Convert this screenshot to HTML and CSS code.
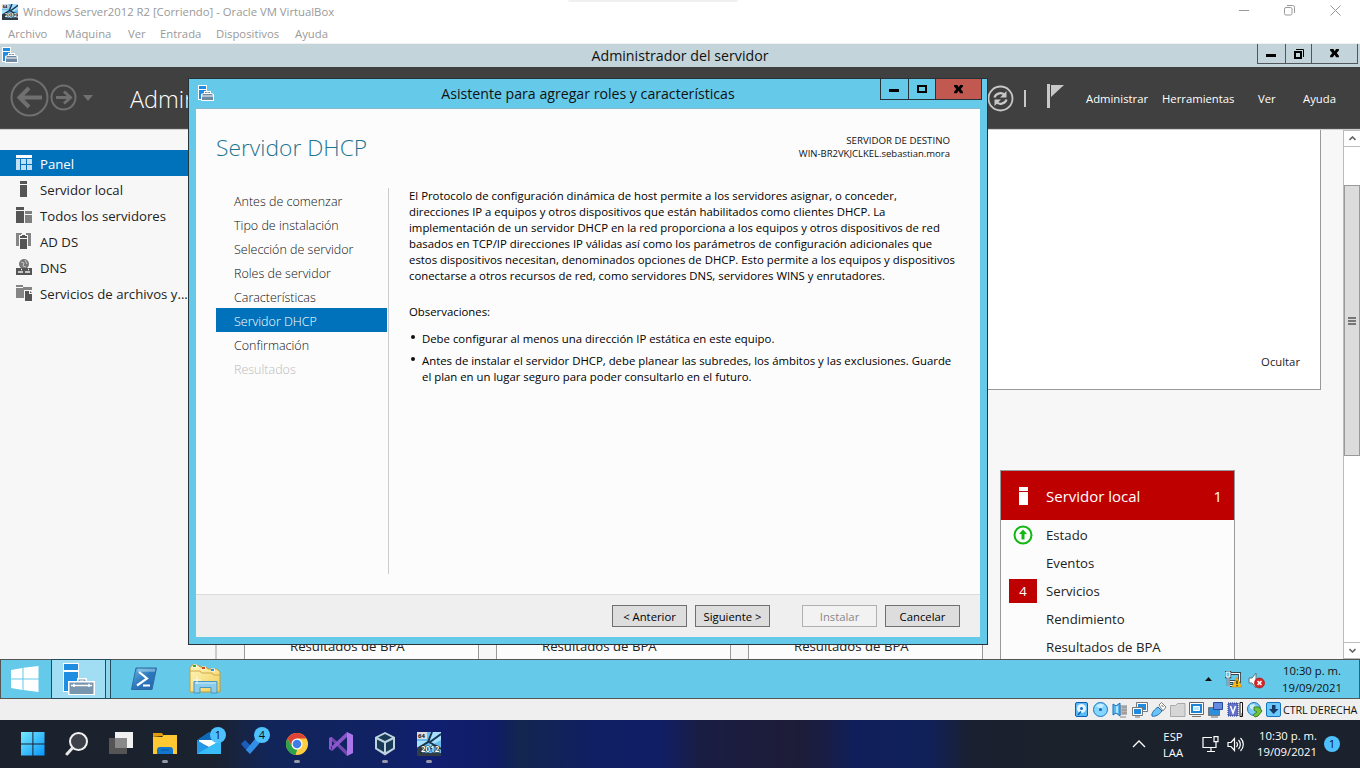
FILE: index.html
```html
<!DOCTYPE html>
<html lang="es">
<head>
<meta charset="utf-8">
<title>Windows Server2012 R2 [Corriendo] - Oracle VM VirtualBox</title>
<link rel="stylesheet" href="styles.css">
</head>
<body>
<svg class="defs" width="0" height="0">
  <symbol id="toolbox" viewBox="0 0 32 32">
    <path d="M0 0h16v18h-5v11H0z" fill="#fff"/>
    <path d="M1 1h14v6H1zM1 9h14v9h-5v10H1z" fill="#1f8ee0"/>
    <path d="M5 18h9v-3h10v3h8v14H5z" fill="#fff"/>
    <path d="M15.500 18v-1.500h7V18h-1.500v-.5h-4v.5zM6.500 19.500h24v11.500h-24z" fill="#7896ad"/>
    <path d="M8 22.500h21M11 20.800v3.200M26 20.800v3.200" stroke="#fff" stroke-width="1.500"/>
  </symbol>
  <symbol id="toolbox-small" viewBox="0 0 16 16">
    <path d="M0 0h9v9H6v6H0z" fill="#fff"/>
    <path d="M1 1h7v3H1zM1 5h7v4H5v5H1z" fill="#1f8ee0"/>
    <path d="M3 9l3-1V6h7v2l3 1v7H3z" fill="#fff"/>
    <path d="M7 8V7h5v1h-1.500v-.4h-2V8zM5 9h9l1 1.500H4zM4 11.500h11V15H4z" fill="#7089a3"/>
  </symbol>
  <symbol id="winx" viewBox="0 0 10 10"><path d="M1 1h3l1.200 2L6.400 1H9v1.200L7 4.500l2 2.500v1.500H6.500L5 6.200 3.500 8.500H1V7l2-2.500-2-2.300z" fill="currentColor"/></symbol>
</svg>
<div class="screen">
  <div class="notch"></div>
  <header class="host-title">
    <svg width="16" height="16" viewBox="0 0 24 24"><use href="#vm2012"/></svg>
    <span class="host-name">Windows Server2012 R2 [Corriendo] - Oracle VM VirtualBox</span>
    <div class="host-controls">
      <svg width="10" height="10" viewBox="0 0 10 10"><path d="M0 5.500h10" stroke="#999"/></svg>
      <svg width="11" height="11" viewBox="0 0 11 11"><rect x=".5" y="2.500" width="7.500" height="7.500" rx="1.500" fill="none" stroke="#999"/><path d="M3 .5h5.500a2 2 0 0 1 2 2V8" fill="none" stroke="#999"/></svg>
      <svg width="11" height="11" viewBox="0 0 11 11"><path d="M.5.5l10 10M10.500.5l-10 10" stroke="#999"/></svg>
    </div>
  </header>
  <nav class="host-menu"><span class="m1">Archivo</span><span class="m2">Máquina</span><span class="m3">Ver</span><span class="m4">Entrada</span><span class="m5">Dispositivos</span><span>Ayuda</span></nav>

  <div class="guest-title">
    <svg class="app-icon" width="16" height="16"><use href="#toolbox-small"/></svg>
    <span class="guest-name">Administrador del servidor</span>
    <div class="win-buttons">
      <span class="wb min"><i></i></span>
      <span class="wb res"><svg width="10" height="10" viewBox="0 0 10 10"><path d="M1 3h6v6H1z" fill="none" stroke="#000" stroke-width="2"/><path d="M2 .5h7.500V8" fill="none" stroke="#000"/></svg></span>
      <span class="wb cls"><svg width="11" height="11"><use href="#winx"/></svg></span>
    </div>
  </div>
  <div class="banner">
    <svg class="navs" width="84" height="40" viewBox="0 0 84 40" fill="none" stroke="#707070">
      <circle cx="19.500" cy="19.500" r="18" stroke-width="2"/><circle cx="53.500" cy="19.500" r="12" stroke-width="2"/>
      <path d="M32 19.500H10M19 10L9.500 19.500 19 29" stroke-width="4"/>
      <path d="M46 19.500h14M54 13.500l6.500 6-6.500 6" stroke-width="3"/>
    </svg>
    <svg class="drop" width="10" height="6"><path d="M0 0h10L5 6z" fill="#707070"/></svg>
    <span class="banner-title">Admin</span>
    <div class="banner-tools">
      <svg width="27" height="27" viewBox="0 0 27 27" fill="none" stroke="#c8c8c8"><circle cx="13.500" cy="13.500" r="12" stroke-width="1.800"/><path d="M7.500 12.500c1-4.500 8-6 10.500-2M19.500 14.500c-1 4.500-8 6-10.500 2" stroke-width="2.200"/><path d="M19.500 6v6.500H13zM7.500 21v-6.500H14z" fill="#c8c8c8" stroke="none"/></svg>
      <i class="pipe"></i>
      <svg class="flag" width="17" height="25"><path d="M0 0h3v24H0zM4 1h13L4 13z" fill="#c8c8c8"/></svg>
      <span class="t1">Administrar</span><span class="t2">Herramientas</span><span class="t3">Ver</span><span>Ayuda</span>
    </div>
  </div>

  <div class="workspace">
    <aside class="sidebar">
      <div class="side on"><svg width="16" height="16"><path d="M0 0h16v3H0z" fill="#fff"/><path d="M0 4h4v11H0zM5 4h5v5H5zM11 4h5v5h-5zM5 10h5v5H5zM11 10h5v5h-5z" fill="#c2def2"/></svg><span>Panel</span></div>
      <div class="side"><svg width="16" height="16"><path d="M4 0h7v3H4zM4 4h7v12H4z" fill="#555"/></svg><span>Servidor local</span></div>
      <div class="side"><svg width="16" height="16"><path d="M0 0h8v3H0zM0 4h8v12H0z" fill="#555"/><path d="M9 4h7v3H9zM9 8h7v8H9z" fill="#808080"/></svg><span>Todos los servidores</span></div>
      <div class="side"><svg width="16" height="16"><path d="M0 0h6v3H3v10H0zM10 0h5v13h-3V3h-2z" fill="#858585"/><path d="M3 2h2V1h5v1h2v3H3z" fill="#f7f7f7"/><path d="M4 3h2V2h3v1h2v2H4zM4 6h7v10H4z" fill="#555"/></svg><span>AD DS</span></div>
      <div class="side"><svg width="16" height="16"><circle cx="8" cy="5" r="5" fill="#777"/><path d="M5 3l3 1-1 3 3 1M9 1l2 4" stroke="#c8c8c8" fill="none"/><path d="M0 9h16v7H0z" fill="#555"/><path d="M2 13h5M9 13h5M5 10.500h1M12 10.500h1" stroke="#eee" stroke-width="1.500"/></svg><span>DNS</span></div>
      <div class="side"><svg width="16" height="16"><path d="M0 0h7v2H0zM0 3h7V2h9v11H0z" fill="#858585"/><path d="M8 5h9v11H8z" fill="#f7f7f7"/><path d="M9 6h4v3h3v7H9zM14 6l2 2h-2z" fill="#555"/></svg><span>Servicios de archivos y...</span></div>
    </aside>
    <main class="dash">
      <section class="welcome"><span>Ocultar</span></section>
      <section class="tiles">
        <article class="tile short"><div class="row"><b></b><span>Resultados de BPA</span></div></article>
        <article class="tile short"><div class="row"><b></b><span>Resultados de BPA</span></div></article>
        <article class="tile short"><div class="row"><b></b><span>Resultados de BPA</span></div></article>
        <article class="tile">
          <div class="tile-head"><svg width="9" height="18"><path d="M0 0h9v4H0zM0 5h9v13H0z" fill="#fff"/></svg><span>Servidor local</span><em>1</em></div>
          <div class="row"><b><svg width="20" height="20" viewBox="0 0 20 20"><circle cx="10" cy="10" r="8.500" fill="none" stroke="#12b812" stroke-width="2"/><path d="M10 4.500l4 4.500h-2.500v5.500h-3V9H6z" fill="#12b812"/></svg></b><span>Estado</span></div>
          <div class="row"><b></b><span>Eventos</span></div>
          <div class="row"><b class="alert">4</b><span>Servicios</span></div>
          <div class="row"><b></b><span>Rendimiento</span></div>
          <div class="row"><b></b><span>Resultados de BPA</span></div>
        </article>
      </section>
    </main>
    <div class="scroll">
      <span class="sb"><svg width="7" height="5"><path d="M.5 4L3.500 1l3 3" fill="none" stroke="#666" stroke-width="1.600"/></svg></span>
      <div class="thumb"><i></i><i></i><i></i></div>
      <span class="sb down"><svg width="7" height="5"><path d="M.5 1l3 3 3-3" fill="none" stroke="#666" stroke-width="1.600"/></svg></span>
    </div>
  </div>

  <div class="guest-bar">
    <span class="g-start"><svg width="28" height="26" viewBox="0 0 28 26"><path d="M0 4l11.500-2v10.500H0zM12.500 1.800L27.500 0v12.500h-15zM0 13.500h11.500V24L0 22zM12.500 13.500h15V26l-15-2z" fill="#fff"/></svg></span>
    <span class="g-active"><svg width="32" height="32"><use href="#toolbox"/></svg></span><span class="g-strip"></span>
    <svg class="g-ps" width="28" height="24" viewBox="0 0 28 24"><defs><linearGradient id="ps" x1="0" x2="1" y1="0" y2="1"><stop offset="0" stop-color="#6cb8e4"/><stop offset=".5" stop-color="#2d78bd"/><stop offset="1" stop-color="#2564ae"/></linearGradient></defs><path d="M6 1h20.500L22 22.500H1.500z" fill="url(#ps)" stroke="#2d6ba0" stroke-linejoin="round"/><path d="M8 1.800h17.500l-.7 3H7z" fill="#b6dff2" opacity=".5"/><path d="M9 5l8 6.500L7 18.500M13 18.500h7" fill="none" stroke="#fff" stroke-width="2.200"/></svg>
    <svg class="g-ex" width="32" height="30" viewBox="0 0 32 30"><defs><linearGradient id="fo" x1="0" x2="1" y1="0" y2="1"><stop offset="0" stop-color="#fff6bd"/><stop offset="1" stop-color="#f0cf57"/></linearGradient></defs><path d="M1 4l2-3h6l2 2h6l2 2h9l3 3v20H1z" fill="url(#fo)" stroke="#c69c35"/><path d="M4 2h4M13 4h4M22 6h4" stroke="#fff" stroke-width="3"/><path d="M4 2h3" stroke="#2eae2e" stroke-width="2"/><path d="M13 4h3" stroke="#d74520" stroke-width="2"/><path d="M22 6h3" stroke="#2496ea" stroke-width="2"/><path d="M1 7h10l1.500 2H23l1.500 2H31" stroke="#d0a94a" fill="none"/><path d="M5 29V17.500h23V29h-6v-5.500H11V29z" fill="#8bcdeb" stroke="#4895bd"/><path d="M6 19h21" stroke="#c8eaf8"/><path d="M8 12v8M4 16h8" stroke="#fff" opacity=".8"/></svg>
    <div class="g-tray">
      <svg width="7" height="4"><path d="M3.500 0L7 4H0z" fill="#111"/></svg>
      <svg class="g-net" width="17" height="17" viewBox="0 0 17 17"><path d="M4 2.500h10.500v8H5M9 11v3M5 14.500h8" fill="none" stroke="#33454e" stroke-width="3"/><path d="M4 2.500h10.500v8H5M9 11v3M5 14.500h8" fill="none" stroke="#fff" stroke-width="1.200"/><path d="M1 1h4v5H1zM3 6v9" fill="#65c9ea" stroke="#33454e" stroke-width="2.400"/><path d="M1 1h4v5H1zM3 6v9" fill="#65c9ea" stroke="#fff"/><path d="M12 6.500l5 9.500H7z" fill="#ffbd13" stroke="#c78610" stroke-width=".6"/><path d="M12 9.500v3.500M12 14v1.200" stroke="#222" stroke-width="1.300"/></svg>
      <svg class="g-vol" width="17" height="17" viewBox="0 0 17 17"><path d="M1 6h3l4-5v15l-4-5H1z" fill="#fff" stroke="#5b7480"/><circle cx="11.500" cy="11" r="5" fill="#d92525" stroke="#ad1212" stroke-width=".7"/><path d="M9.500 9l4 4M13.500 9l-4 4" stroke="#fff" stroke-width="1.700"/></svg>
      <div class="g-clock"><span>10:30 p. m.</span><span>19/09/2021</span></div>
    </div>
  </div>

  <div class="vb-status">
    <svg viewBox="0 0 16 16"><rect x="1.500" y=".5" width="12" height="14" rx="1.500" fill="#5bbcf5" stroke="#0d5fb5"/><circle cx="7.500" cy="6.500" r="4.500" fill="#e5f5ff"/><circle cx="7.500" cy="6.500" r="1.500" fill="#1a6bc2"/><path d="M7 9.500L4 13" stroke="#1464b0" stroke-width="1.600"/></svg>
    <svg viewBox="0 0 16 16"><circle cx="7.500" cy="7.500" r="7" fill="#84d6ff" stroke="#1a74c4"/><path d="M3 4a6 6 0 0 1 8-1L8 7z" fill="#c7efff"/><circle cx="7.500" cy="7.500" r="1.500" fill="#1c62aa"/></svg>
    <svg viewBox="0 0 16 16"><path d="M8 3h7v10H8z" fill="#b7b7b7"/><path d="M10 5h5M10 8h5M10 11h5M8 15h6" stroke="#888"/><path d="M1 2l3 2 4-3v13l-4-3-3 2z" fill="#55baf6" stroke="#1970bd"/><path d="M5 4v7" stroke="#d9f2ff" stroke-width="1.500"/></svg>
    <svg viewBox="0 0 16 16"><path d="M5.500 1.500h9v7h-9z" fill="#1e8be0" stroke="#fff"/><path d="M4.500.5h11v9h-11z" fill="none" stroke="#777"/><path d="M1.500 6.500h8v6h-8z" fill="#1e8be0" stroke="#fff"/><path d="M.5 5.500h10v8H.5zM3 15h5" fill="none" stroke="#777"/></svg>
    <svg viewBox="0 0 16 16"><path d="M1 14c-1-3 3-7 6-9l4 4c-3 4-7 6-10 5z" fill="#6cc3f8" stroke="#206eaf"/><path d="M8 3l2.500-2.500L15 5l-3 4z" fill="#fff" stroke="#808080"/><path d="M10.500 3l2 2" stroke="#555"/></svg>
    <svg viewBox="0 0 16 16"><path d="M.5 3.500h5l2-2h7.500v13H.5z" fill="#d6d6d6" stroke="#a9a9a9"/></svg>
    <svg viewBox="0 0 16 16"><path d="M.5.5h14v12H.5z" fill="#fff" stroke="#666"/><path d="M2 2h11v9H2z" fill="#1c85d5"/><path d="M4.500 4.500h6v4h-6z" fill="#bde7ff" stroke="#fff"/><path d="M3 14.500h9" stroke="#777"/></svg>
    <svg viewBox="0 0 16 16"><path d="M.5 5.500h11v8H.5z" fill="#2c8fdd" stroke="#777"/><path d="M5.500.5h9v7h-9z" fill="#648be0" stroke="#26489d"/><path d="M3 15h7" stroke="#777"/></svg>
    <svg viewBox="0 0 16 16"><rect x="1" y="1" width="10" height="13" fill="#6071ca" stroke="#27358b" stroke-dasharray="1 1"/><path d="M3.500 4l2.500 7L8.500 4" stroke="#fff" stroke-width="1.500" fill="none"/><path d="M13 .5h2.500v14H13z" fill="#fff" stroke="#111"/><path d="M14.500 11v3" stroke="#69d145"/></svg>
    <svg viewBox="0 0 16 16"><circle cx="7" cy="7" r="6.500" fill="#7bc9f7" stroke="#1d75bc"/><path d="M3 3l4-1 2 3-3 3-3-2z" fill="#c9efff"/><path d="M7 5h5l3 4-4 5-3 1-2-2 4-3-3-2z" fill="#70c43d" stroke="#3c7e22"/></svg>
    <svg viewBox="0 0 16 16"><rect x=".5" y=".5" width="14" height="14" rx="1.500" fill="#6ac8fb" stroke="#1573bd"/><path d="M6 3h3.500v4h3l-5 5-4.500-5h3z" fill="#183b6a"/></svg>
    <span>CTRL DERECHA</span>
  </div>

  <footer class="host-bar">
    <div class="apps">
      <span class="app"><svg width="24" height="24"><defs><linearGradient id="w11" x1="0" y1="0" x2="1" y2="1"><stop offset="0" stop-color="#77eaff"/><stop offset="1" stop-color="#0796fb"/></linearGradient></defs><path d="M0 0h11.400v11.400H0zM12.400 0H23.500v11.400H12.400zM0 12.400h11.400V23.500H0zM12.400 12.400H23.500V23.500H12.400z" fill="url(#w11)"/></svg></span>
      <span class="app"><svg width="24" height="24"><circle cx="13.500" cy="9.500" r="8.500" fill="#3d424a" stroke="#f3f3f3" stroke-width="2"/><path d="M7.500 16L2 22" stroke="#e7e7e7" stroke-width="3" stroke-linecap="round"/></svg></span>
      <span class="app"><svg width="24" height="24"><path d="M6 0h18v16H6z" fill="#f1f1f1"/><path d="M0 6h18v16H0z" fill="#555"/><path d="M6 6h12v10H6z" fill="#898989"/></svg></span>
      <span class="app open"><svg width="24" height="24"><path d="M0 1h9l2 3h-2L0 5z" fill="#e09b0c"/><path d="M0 5h9l2-2h13v19H0z" fill="#ffc933"/><path d="M4 22v-4q0-3 3-3h10q3 0 3 3v4z" fill="#1077cc"/><path d="M8 18h8" stroke="#0c559d"/></svg></span>
      <span class="app"><svg width="24" height="24"><path d="M0 8L12 0l12 8v14H0z" fill="#1069b6"/><path d="M2 8h20v2l-10 5L2 10z" fill="#fff"/><path d="M0 8l14 9-14 5z" fill="#2697e6"/><path d="M24 8v14H0z" fill="#38bdf8"/></svg><i class="badge">1</i></span>
      <span class="app"><svg width="24" height="24"><path d="M0 12l4-4 6 6-4 5z" fill="#1b5db9"/><path d="M5 18L18 2l5 4L9 22z" fill="#328fe5"/></svg><i class="badge">4</i></span>
      <span class="app open"><svg width="24" height="24"><circle cx="12" cy="12" r="11" fill="#ffcd40"/><path d="M2.500 6.500A11 11 0 0 1 21.500 6.500H12L7.200 14.700z" fill="#df4336"/><path d="M2.500 6.500L7.200 15a5.500 5.500 0 0 0 5 2.500L10.500 23A11 11 0 0 1 2.500 6.500z" fill="#2ba24c"/><circle cx="12" cy="12" r="5.500" fill="#fff"/><circle cx="12" cy="12" r="4.300" fill="#3f7ee8"/></svg></span>
      <span class="app"><svg width="24" height="24"><path d="M0 6l3-1 15 14v5z" fill="#7546b0"/><path d="M0 6l3-1v14l-3-2zM3 19L18 5V0L2 15z" fill="#8b55cb"/><path d="M18 0l6 3v18l-6 3z" fill="#ad75eb"/></svg></span>
      <span class="app open vb"><svg width="22" height="24"><path d="M11 0l10 5v12l-10 6.500L1 17V5z" fill="#bfd2df"/><path d="M11 2l7 3.500-7 3.500-7-3.500zM3 7.500l7 3.500v9L3 16zM19 7.500L12 11v9l7-4z" fill="#173b57"/></svg></span>
      <span class="app open"><svg width="24" height="24"><symbol id="vm2012" viewBox="0 0 24 24"><path d="M0 0h24v24H0z" fill="#69bced"/><path d="M13 0h11v8L13 14zM0 9h11L2 18H0z" fill="#a7dfff"/><path d="M15 0l-4 10L0 17M12 10l12 7M24 2L13 10" stroke="#173750" stroke-width="2" fill="none"/><path d="M0 0h10v7H0z" fill="#ddd"/><path d="M0 16l5-3v11H0zM0 21h24v3H0z" fill="#333b44"/><text x="1" y="6" class="t64">64</text><text x="4" y="20" class="t12">2012</text></symbol><use href="#vm2012"/></svg></span>
    </div>
    <div class="tray">
      <svg class="up" width="14" height="8"><path d="M1 7l6-6 6 6" fill="none" stroke="#fff" stroke-width="1.300"/></svg>
      <div class="lang"><span>ESP</span><span>LAA</span></div>
      <svg class="net" width="17" height="17" fill="none" stroke="#fff" stroke-width="1.200"><path d="M10 1.500H1v10h13V8M5 15.500h8M9 12v3M12 .6h4v5h-4zM14 6v3.500"/></svg>
      <svg class="vol" width="17" height="15" fill="none" stroke="#fff" stroke-width="1.200"><path d="M1 5.500h3l3.500-4v12l-3.500-4H1zM9.500 5a4 4 0 0 1 0 5M11.500 3a6.500 6.500 0 0 1 0 9M13.500 1a9 9 0 0 1 0 13"/></svg>
      <div class="h-clock"><span>10:30 p. m.</span><span>19/09/2021</span></div>
      <span class="count">1</span>
    </div>
  </footer>

  <div class="dialog">
    <div class="d-title"><svg width="16" height="16"><use href="#toolbox-small"/></svg><span>Asistente para agregar roles y características</span>
      <div class="win-buttons">
        <span class="wb min"><i></i></span>
        <span class="wb max"><i></i></span>
        <span class="wb cls red"><svg width="11" height="11"><use href="#winx"/></svg></span>
      </div>
    </div>
    <div class="d-body">
      <div class="d-head"><h1>Servidor DHCP</h1><div class="dest"><span class="dest1">SERVIDOR DE DESTINO</span><span>WIN-BR2VKJCLKEL.sebastian.mora</span></div></div>
      <div class="d-main">
        <nav class="steps"><span>Antes de comenzar</span><span>Tipo de instalación</span><span>Selección de servidor</span><span>Roles de servidor</span><span>Características</span><span class="cur">Servidor DHCP</span><span>Confirmación</span><span class="off">Resultados</span></nav>
        <div class="copy">
          <p>El Protocolo de configuración dinámica de host permite a los servidores asignar, o conceder,<br>direcciones IP a equipos y otros dispositivos que están habilitados como clientes DHCP. La<br>implementación de un servidor DHCP en la red proporciona a los equipos y otros dispositivos de red<br>basados en TCP/IP direcciones IP válidas así como los parámetros de configuración adicionales que<br>estos dispositivos necesitan, denominados opciones de DHCP. Esto permite a los equipos y dispositivos<br>conectarse a otros recursos de red, como servidores DNS, servidores WINS y enrutadores.</p>
          <p class="obs">Observaciones:</p>
          <ul><li>Debe configurar al menos una dirección IP estática en este equipo.</li><li>Antes de instalar el servidor DHCP, debe planear las subredes, los ámbitos y las exclusiones. Guarde<br>el plan en un lugar seguro para poder consultarlo en el futuro.</li></ul>
        </div>
      </div>
      <div class="d-foot"><button>&lt; Anterior</button><button>Siguiente &gt;</button><button class="dis" disabled>Instalar</button><button>Cancelar</button></div>
    </div>
  </div>
</div>
</body>
</html>
```
FILE: styles.css
```css
* { box-sizing: border-box; }
body { margin: 0; font-family: "Open Sans", "Noto Sans", sans-serif; font-size: 11.3px; color: #222; overflow: hidden; }
svg { display: block; flex: none; }
.defs { position: absolute; }
.screen { position: relative; width: 1360px; height: 768px; display: flex; flex-direction: column; background: #fff; overflow: hidden; white-space: nowrap; }
.notch { position: absolute; left: 568px; top: -3px; width: 170px; height: 5px; border-radius: 4px; background: #f0f0f0; }

.host-title { height: 23px; display: flex; align-items: center; padding-left: 2px; color: #999; }
.host-name { margin-left: 5px; flex: 1; }
.host-controls { display: flex; gap: 35px; padding-right: 19px; align-self: flex-start; padding-top: 5px; }
.host-menu { height: 21px; display: flex; align-items: center; padding-left: 8px; color: #999; border-bottom: 1px solid #f0f0f0; }
.m1 { width: 57px; } .m2 { width: 63px; } .m3 { width: 32px; } .m4 { width: 56px; } .m5 { width: 79px; }

.guest-title { height: 23px; display: flex; background: #c3d5db; position: relative; justify-content: center; padding-top: 1px; }
.app-icon { position: absolute; left: 2px; top: 3px; }
.guest-name { font-size: 14.2px; line-height: 21px; color: #111; }
.win-buttons { display: flex; position: absolute; }
.guest-title .win-buttons { right: 2px; top: 0; }
.wb { display: flex; align-items: center; justify-content: center; height: 20px; border: 1px solid #50565a; border-top: 0; margin-left: -1px; color: #000; }
.min { width: 29px; padding-right: 1px; } .res, .max { width: 27px; } .cls { width: 47px; padding-right: 1px; }
.min i { width: 10px; height: 3px; background: #000; margin-top: 3px; }
.max i { width: 10px; height: 8px; border: 2px solid #000; }

.banner { height: 62px; background: #404040; display: flex; align-items: center; padding-left: 10px; border-bottom: 1px solid #505050; color: #fff; }
.drop { margin-left: -11px; }
.banner-title { font-size: 23.5px; font-weight: 300; margin-left: 37px; padding-top: 2px; }
.banner-tools { margin-left: auto; width: 373px; display: flex; align-items: center; padding-top: 1px; }
.pipe { width: 2px; height: 17px; background: #c8c8c8; margin-left: 10px; }
.flag { margin-left: 21px; margin-top: -4px; }
.t1 { margin-left: 22px; width: 76px; } .t2 { width: 96px; } .t3 { width: 45px; }

.workspace { height: 530px; display: flex; background: #f7f7f7; border-top: 1px solid #d0d0d0; }
.sidebar { width: 188px; padding-top: 20px; font-size: 13.2px; color: #222; }
.side { height: 26px; display: flex; align-items: center; gap: 8px; padding-left: 16px; }
.side span { padding-top: 2px; }
.side.on { background: #0072bc; color: #fff; }
.dash { flex: 1; display: flex; flex-direction: column; align-items: flex-start; }
.welcome { width: 1133px; height: 260px; background: #fff; border-right: 1px solid #999; border-bottom: 1px solid #999; display: flex; justify-content: flex-end; align-items: flex-end; padding: 0 20px 20px 0; flex: none; }
.tiles { margin: 80px 0 0 27px; padding-left: 27px; border-left: 2px solid #ccc; display: flex; gap: 17px; align-items: flex-end; height: 189px; flex: none; }
.tile { width: 235px; height: 189px; background: #fcfcfc; border: 1px solid #999; border-bottom: 0; }
.tile.short { height: 29px; }
.tile-head { height: 49px; background: #bf0000; color: #fff; font-size: 15px; display: flex; align-items: center; padding: 0 12px 0 18px; }
.tile-head span { margin-left: 18px; flex: 1; }
.tile-head em { font-style: normal; }
.row { height: 28px; display: flex; align-items: center; font-size: 13.2px; gap: 9px; padding-left: 8px; padding-top: 2px; }
.row b { width: 28px; height: 24px; display: flex; align-items: center; justify-content: center; font-weight: 400; }
.row .alert { background: #bf0000; color: #fff; }
.scroll { width: 17px; background: #fff; border: 1px solid #bbb; border-right: 0; display: flex; flex-direction: column; }
.sb { height: 16px; display: flex; align-items: center; justify-content: center; border-bottom: 1px solid #bbb; }
.sb.down { margin-top: auto; border-bottom: 0; border-top: 1px solid #bbb; }
.thumb { margin-top: 38px; height: 271px; background: #dcdcdc; border: 1px solid #999; display: flex; flex-direction: column; align-items: center; justify-content: center; gap: 1px; }
.thumb i { width: 8px; height: 2px; background: #777; }

.guest-bar { height: 40px; background: #65c9ea; border: 1px solid #555; display: flex; align-items: center; }
.g-start { width: 50px; display: flex; justify-content: center; padding-right: 2px; }
.g-active { width: 55px; height: 40px; background: #a2def3; border: 1px solid #234d5d; display: flex; align-items: center; justify-content: center; }
.g-strip { width: 5px; height: 40px; background: #8dd6ef; border: 1px solid #234d5d; border-left: 0; }
.g-ps { margin-left: 19px; } .g-ex { margin-left: 31px; }
.g-tray { margin-left: auto; display: flex; align-items: center; padding-right: 17px; color: #111; }
.g-net { margin-left: 13px; } .g-vol { margin-left: 6px; margin-top: 2px; }
.g-clock { width: 60px; margin-left: 17px; display: flex; flex-direction: column; align-items: center; line-height: 17px; }

.vb-status { height: 21px; background: #efefef; display: flex; align-items: center; justify-content: flex-end; gap: 3.200px; padding-right: 1px; color: #111; }
.vb-status svg { width: 16px; height: 16px; }
.vb-status span { width: 76px; margin-left: -2px; font-size: 10.8px; letter-spacing: -.15px; }

.host-bar { height: 48px; display: flex; justify-content: space-between; background: linear-gradient(90deg, #1b222d 0, #1a222f 215px, #12255a 270px, #102262 370px, #101f70 430px, #101c66 495px, #12264f 520px, #101f62 590px, #101e66 660px, #1a1d43 700px, #1d1c38 800px, #1a1d42 820px, #101f5b 855px, #102058 930px, #1a2030 970px, #1b222c 1050px, #1b222d 1360px); color: #fff; }
.apps { display: flex; padding-left: 11px; }
.app { width: 44px; position: relative; display: flex; align-items: center; justify-content: center; }
.app.open::after { content: ""; position: absolute; bottom: 5px; left: 19px; width: 6px; height: 3px; border-radius: 2px; background: #9699a8; }
.badge { position: absolute; left: 23px; top: 7px; width: 16px; height: 16px; border-radius: 50%; background: #4dc2ff; color: #111; font: normal 11px/16px "Open Sans", sans-serif; text-align: center; }
.t64 { font: 700 6px "Open Sans", sans-serif; fill: #111; }
.t12 { font: 700 8px "Open Sans", sans-serif; fill: #fff; stroke: #111; stroke-width: 1.200px; paint-order: stroke; }
.tray { display: flex; align-items: center; padding-right: 20px; }
.lang { margin-left: 16px; width: 22px; display: flex; flex-direction: column; align-items: center; line-height: 16px; padding-top: 2px; }
.net { margin-left: 18px; } .vol { margin-left: 8px; }
.h-clock { margin-left: 13px; width: 60px; display: flex; flex-direction: column; align-items: flex-end; line-height: 16px; }
.count { margin-left: 7px; width: 16px; height: 16px; border-radius: 50%; background: #4dc2ff; color: #111; line-height: 16px; text-align: center; }

.dialog { position: absolute; left: 188px; top: 78px; width: 800px; height: 567px; background: #65c9ea; border: 1px solid #26343a; padding: 0 7px 7px; display: flex; flex-direction: column; }
.d-title { height: 29px; flex: none; position: relative; display: flex; justify-content: center; align-items: center; font-size: 14.15px; color: #111; }
.d-title > svg { position: absolute; left: 2px; top: 6px; }
.d-title .win-buttons { right: -2px; top: 0; }
.d-title .wb { height: 21px; border-color: #26343a; }
.d-title .max { width: 28px; margin-right: -1px; } .d-title .cls { margin-left: 0; }
.wb.red { background: #c15950; }
.d-body { flex: 1; background: #fcfcfc; display: flex; flex-direction: column; border-top: 1px solid #88b9ca; }
.d-head { height: 79px; display: flex; justify-content: space-between; padding: 0 30px 0 20px; }
h1 { margin: 21px 0 0; font-size: 22.8px; line-height: 36px; font-weight: 300; color: #1b7592; }
.dest { display: flex; flex-direction: column; align-items: flex-end; font-size: 9.500px; line-height: 13px; padding-top: 25px; color: #111; }
.dest1 { font-size: 9.7px; }
.d-main { height: 386px; display: flex; }
.steps { width: 193px; padding-left: 20px; border-right: 1px solid #ccc; display: flex; flex-direction: column; font-size: 12.500px; font-weight: 300; color: #111; }
.steps span { height: 24px; line-height: 27px; padding-left: 18px; margin-right: 1px; }
.steps .cur { background: #0072bc; color: #fff; }
.steps .off { color: #bbb; }
.copy { padding: 0 0 0 20px; font-size: 11.37px; line-height: 16px; color: #000; }
p { margin: 0; } .obs { margin-top: 20px; }
ul { margin: 11px 0 0; padding: 0 0 0 13px; list-style: none; }
li { margin-bottom: 6px; position: relative; }
li::before { content: ""; position: absolute; left: -11px; top: 4px; width: 4px; height: 4px; border-radius: 50%; background: #111; }
.d-foot { margin-top: auto; height: 43px; background: #efefef; border-top: 1px solid #dcdcdc; display: flex; justify-content: flex-end; gap: 8px; padding: 10px 20px 0 0; }
button { width: 75px; height: 22px; padding: 0; font: 11.3px "Open Sans", sans-serif; border: 1px solid #707070; background: #ddd; color: #000; }
.dis { margin-left: 24px; background: #f2f2f2; border-color: #b0b0b0; color: #888; }
```
